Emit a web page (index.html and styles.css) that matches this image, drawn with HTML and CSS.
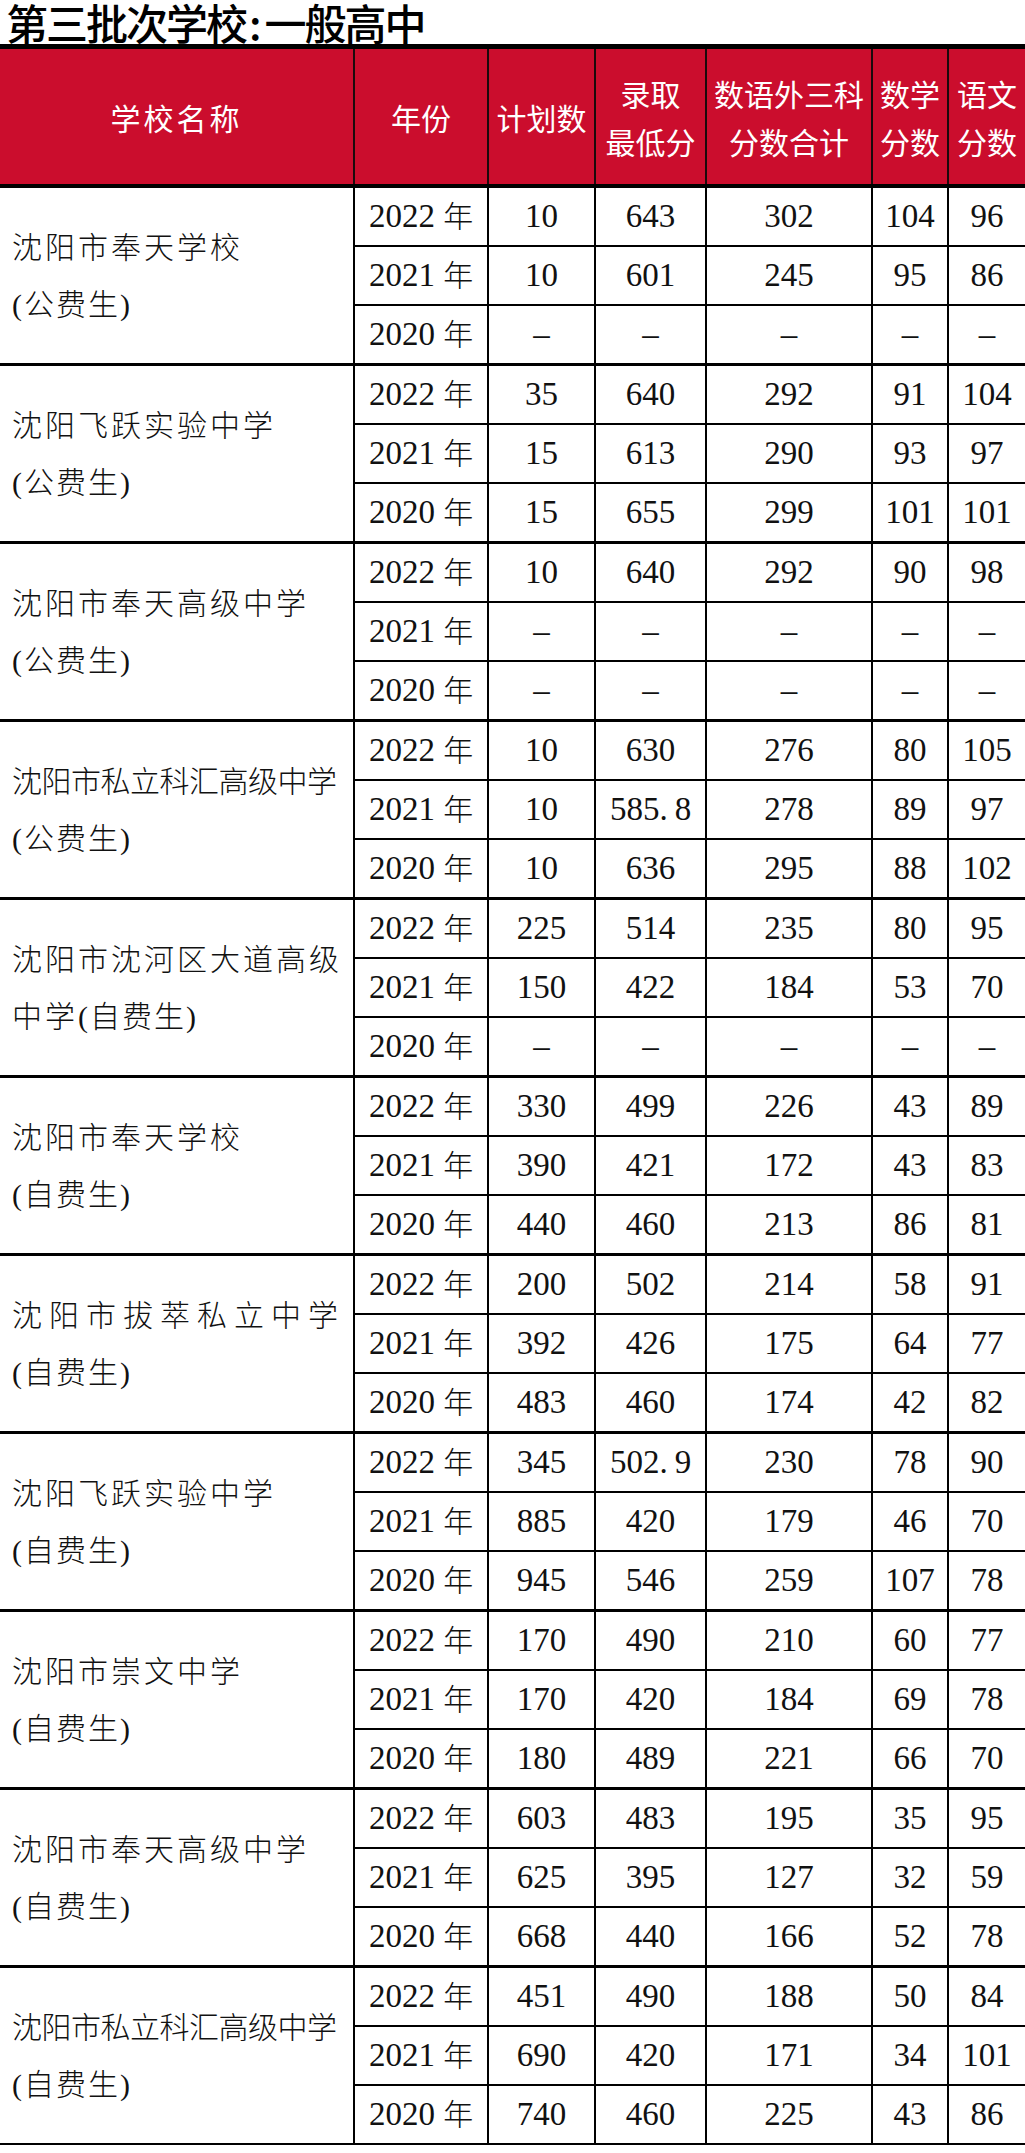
FILE: index.html
```html
<!DOCTYPE html>
<html lang="zh-CN">
<head>
<meta charset="utf-8">
<title>第三批次学校:一般高中</title>
<link rel="stylesheet" href="styles.css">
</head>
<body>
<h1 class="title">第三批次学校<span class="colon">:</span>一般高中</h1>
<div class="head">
  <div class="h wide">学校名称</div>
  <div class="h">年份</div>
  <div class="h">计划数</div>
  <div class="h">录取<br>最低分</div>
  <div class="h">数语外三科<br>分数合计</div>
  <div class="h">数学<br>分数</div>
  <div class="h">语文<br>分数</div>
</div>

<div class="group">
  <div class="name"><p>沈阳市奉天学校<br><span class="sub">(公费生)</span></p></div>
  <div class="c">2022 <span class="n">年</span></div><div class="c">10</div><div class="c">643</div><div class="c">302</div><div class="c">104</div><div class="c">96</div>
  <div class="c">2021 <span class="n">年</span></div><div class="c">10</div><div class="c">601</div><div class="c">245</div><div class="c">95</div><div class="c">86</div>
  <div class="c">2020 <span class="n">年</span></div><div class="c">–</div><div class="c">–</div><div class="c">–</div><div class="c">–</div><div class="c">–</div>
</div>

<div class="group">
  <div class="name"><p>沈阳飞跃实验中学<br><span class="sub">(公费生)</span></p></div>
  <div class="c">2022 <span class="n">年</span></div><div class="c">35</div><div class="c">640</div><div class="c">292</div><div class="c">91</div><div class="c">104</div>
  <div class="c">2021 <span class="n">年</span></div><div class="c">15</div><div class="c">613</div><div class="c">290</div><div class="c">93</div><div class="c">97</div>
  <div class="c">2020 <span class="n">年</span></div><div class="c">15</div><div class="c">655</div><div class="c">299</div><div class="c">101</div><div class="c">101</div>
</div>

<div class="group">
  <div class="name"><p>沈阳市奉天高级中学<br><span class="sub">(公费生)</span></p></div>
  <div class="c">2022 <span class="n">年</span></div><div class="c">10</div><div class="c">640</div><div class="c">292</div><div class="c">90</div><div class="c">98</div>
  <div class="c">2021 <span class="n">年</span></div><div class="c">–</div><div class="c">–</div><div class="c">–</div><div class="c">–</div><div class="c">–</div>
  <div class="c">2020 <span class="n">年</span></div><div class="c">–</div><div class="c">–</div><div class="c">–</div><div class="c">–</div><div class="c">–</div>
</div>

<div class="group">
  <div class="name tight"><p>沈阳市私立科汇高级中学<br><span class="sub">(公费生)</span></p></div>
  <div class="c">2022 <span class="n">年</span></div><div class="c">10</div><div class="c">630</div><div class="c">276</div><div class="c">80</div><div class="c">105</div>
  <div class="c">2021 <span class="n">年</span></div><div class="c">10</div><div class="c">585.<span class="d">8</span></div><div class="c">278</div><div class="c">89</div><div class="c">97</div>
  <div class="c">2020 <span class="n">年</span></div><div class="c">10</div><div class="c">636</div><div class="c">295</div><div class="c">88</div><div class="c">102</div>
</div>

<div class="group">
  <div class="name"><p>沈阳市沈河区大道高级<br>中学<span class="sub">(自费生)</span></p></div>
  <div class="c">2022 <span class="n">年</span></div><div class="c">225</div><div class="c">514</div><div class="c">235</div><div class="c">80</div><div class="c">95</div>
  <div class="c">2021 <span class="n">年</span></div><div class="c">150</div><div class="c">422</div><div class="c">184</div><div class="c">53</div><div class="c">70</div>
  <div class="c">2020 <span class="n">年</span></div><div class="c">–</div><div class="c">–</div><div class="c">–</div><div class="c">–</div><div class="c">–</div>
</div>

<div class="group">
  <div class="name"><p>沈阳市奉天学校<br><span class="sub">(自费生)</span></p></div>
  <div class="c">2022 <span class="n">年</span></div><div class="c">330</div><div class="c">499</div><div class="c">226</div><div class="c">43</div><div class="c">89</div>
  <div class="c">2021 <span class="n">年</span></div><div class="c">390</div><div class="c">421</div><div class="c">172</div><div class="c">43</div><div class="c">83</div>
  <div class="c">2020 <span class="n">年</span></div><div class="c">440</div><div class="c">460</div><div class="c">213</div><div class="c">86</div><div class="c">81</div>
</div>

<div class="group">
  <div class="name spread"><p>沈阳市拔萃私立中学<br><span class="sub">(自费生)</span></p></div>
  <div class="c">2022 <span class="n">年</span></div><div class="c">200</div><div class="c">502</div><div class="c">214</div><div class="c">58</div><div class="c">91</div>
  <div class="c">2021 <span class="n">年</span></div><div class="c">392</div><div class="c">426</div><div class="c">175</div><div class="c">64</div><div class="c">77</div>
  <div class="c">2020 <span class="n">年</span></div><div class="c">483</div><div class="c">460</div><div class="c">174</div><div class="c">42</div><div class="c">82</div>
</div>

<div class="group">
  <div class="name"><p>沈阳飞跃实验中学<br><span class="sub">(自费生)</span></p></div>
  <div class="c">2022 <span class="n">年</span></div><div class="c">345</div><div class="c">502.<span class="d">9</span></div><div class="c">230</div><div class="c">78</div><div class="c">90</div>
  <div class="c">2021 <span class="n">年</span></div><div class="c">885</div><div class="c">420</div><div class="c">179</div><div class="c">46</div><div class="c">70</div>
  <div class="c">2020 <span class="n">年</span></div><div class="c">945</div><div class="c">546</div><div class="c">259</div><div class="c">107</div><div class="c">78</div>
</div>

<div class="group">
  <div class="name"><p>沈阳市崇文中学<br><span class="sub">(自费生)</span></p></div>
  <div class="c">2022 <span class="n">年</span></div><div class="c">170</div><div class="c">490</div><div class="c">210</div><div class="c">60</div><div class="c">77</div>
  <div class="c">2021 <span class="n">年</span></div><div class="c">170</div><div class="c">420</div><div class="c">184</div><div class="c">69</div><div class="c">78</div>
  <div class="c">2020 <span class="n">年</span></div><div class="c">180</div><div class="c">489</div><div class="c">221</div><div class="c">66</div><div class="c">70</div>
</div>

<div class="group">
  <div class="name"><p>沈阳市奉天高级中学<br><span class="sub">(自费生)</span></p></div>
  <div class="c">2022 <span class="n">年</span></div><div class="c">603</div><div class="c">483</div><div class="c">195</div><div class="c">35</div><div class="c">95</div>
  <div class="c">2021 <span class="n">年</span></div><div class="c">625</div><div class="c">395</div><div class="c">127</div><div class="c">32</div><div class="c">59</div>
  <div class="c">2020 <span class="n">年</span></div><div class="c">668</div><div class="c">440</div><div class="c">166</div><div class="c">52</div><div class="c">78</div>
</div>

<div class="group last">
  <div class="name tight"><p>沈阳市私立科汇高级中学<br><span class="sub">(自费生)</span></p></div>
  <div class="c">2022 <span class="n">年</span></div><div class="c">451</div><div class="c">490</div><div class="c">188</div><div class="c">50</div><div class="c">84</div>
  <div class="c">2021 <span class="n">年</span></div><div class="c">690</div><div class="c">420</div><div class="c">171</div><div class="c">34</div><div class="c">101</div>
  <div class="c">2020 <span class="n">年</span></div><div class="c">740</div><div class="c">460</div><div class="c">225</div><div class="c">43</div><div class="c">86</div>
</div>
</body>
</html>
```
FILE: styles.css
```css
* {
  box-sizing: border-box;
  margin: 0;
  padding: 0;
}

body {
  margin: 0;
  width: 1025px;
  background: #ffffff;
  color: #111111;
  font-family: "Liberation Serif", "Noto Sans CJK SC", serif;
}

.title {
  height: 49px;
  padding-left: 6px;
  padding-top: 1px;
  border-bottom: 5px solid #000000;
  font-family: "Noto Sans CJK SC", sans-serif;
  font-size: 42px;
  font-weight: 500;
  line-height: 42px;
  letter-spacing: -2px;
  color: #000000;
  white-space: nowrap;
}

.title .colon {
  padding: 0 5px 0 3px;
}

.head,
.group {
  display: grid;
  grid-template-columns: 353px 132px 105px 109px 164px 74px 76px;
  column-gap: 2px;
}

.head {
  height: 139px;
  background: #1c0a0c;
  border-bottom: 4px solid #000000;
}

.h {
  display: flex;
  align-items: center;
  justify-content: center;
  text-align: center;
  background: #cb0d2d;
  color: #ffffff;
  font-family: "Noto Sans CJK SC", sans-serif;
  font-size: 30px;
  line-height: 48px;
  white-space: nowrap;
}

.h.wide {
  letter-spacing: 3px;
}

.group {
  grid-template-rows: 57px 57px 57px;
  row-gap: 2px;
  background: #000000;
  border-bottom: 3px solid #000000;
}

.group.last {
  border-bottom-width: 2px;
}

.group > div {
  background: #ffffff;
}

.name {
  grid-row: span 3;
  display: flex;
  align-items: center;
  padding-left: 12px;
  font-size: 30px;
  font-weight: 300;
  line-height: 57px;
  letter-spacing: 3px;
  white-space: nowrap;
}

.name.tight {
  letter-spacing: -0.5px;
}

.name.spread {
  letter-spacing: 7px;
}

.name .sub {
  letter-spacing: 2px;
}

.c {
  text-align: center;
  font-size: 33px;
  line-height: 57px;
  white-space: nowrap;
}

.c .n {
  font-size: 30px;
  font-weight: 300;
}

.c .d {
  padding-left: 7px;
}
```
